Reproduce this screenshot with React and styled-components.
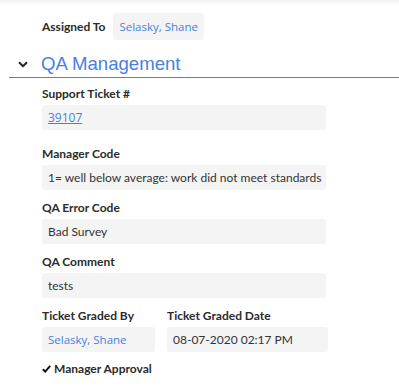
import React from "react";
import styled, { createGlobalStyle } from "styled-components";

const GlobalStyle = createGlobalStyle`
	body {
		margin: 0;
		background: #fff;
		font-family: "Lato", "Open Sans", sans-serif;
		color: #333;
	}
`;

const Page = styled.div`
	width: 399px;
	height: 388px;
	overflow: hidden;
	position: relative;
	&::before {
		content: "";
		position: absolute;
		top: 0;
		left: 0;
		right: 0;
		height: 6px;
		background: linear-gradient(rgba(0, 0, 0, 0.06), rgba(0, 0, 0, 0));
	}
`;

const AssignedRow = styled.div`
	display: flex;
	align-items: center;
	gap: 8px;
	padding: 13px 0 0 42px;
`;

const Label = styled.div`
	font-size: 12px;
	font-weight: 700;
	color: #2b2b2b;
	line-height: 15px;
	white-space: nowrap;
	margin-bottom: ${({ gap }) => (gap === undefined ? 4 : gap)}px;
`;

const Value = styled.div`
	box-sizing: border-box;
	background: #f4f4f4;
	border-radius: 3px;
	height: ${({ tall }) => (tall ? 27 : 25)}px;
	width: ${({ width }) => (width ? `${width}px` : "auto")};
	padding: 0 6px;
	display: flex;
	align-items: center;
	white-space: nowrap;
	font-size: ${({ blue }) => (blue ? 11.5 : 12)}px;
	color: ${({ blue }) => (blue ? "#4a7fdc" : "#333")};
	font-family: ${({ blue }) =>
		blue ? '"Open Sans", "Lato", sans-serif' : '"Lato", sans-serif'};
`;

const TicketLink = styled.a`
	color: #4a7fdc;
	text-decoration: underline;
	font-family: "Open Sans", "Lato", sans-serif;
`;

const Header = styled.div`
	display: flex;
	align-items: center;
	margin: 10px 0 0 9px;
	padding: 0 0 0 9px;
	height: 27px;
	border-bottom: 1.5px solid #4a80e0;
`;

const Chevron = styled.svg`
	width: 10px;
	height: 7px;
	margin-right: 13px;
	margin-top: 2px;
`;

const Title = styled.div`
	font-family: "Liberation Sans", Arial, sans-serif;
	font-size: 18.6px;
	color: #4a80e0;
	line-height: 22px;
`;

const Fields = styled.div`
	padding: 8px 0 0 42px;
	width: 284px;
`;

const Field = styled.div`
	margin-bottom: ${({ spacing }) => (spacing === undefined ? 10 : spacing)}px;
`;

const Pair = styled.div`
	display: flex;
	gap: 12px;
`;

const Approval = styled.div`
	display: flex;
	align-items: center;
	gap: 3px;
	margin-top: 9px;
	font-size: 12px;
	font-weight: 700;
	color: #2b2b2b;
`;

export default function App() {
	return (
		<Page>
			<GlobalStyle />
			<AssignedRow>
				<Label gap={0}>Assigned To</Label>
				<Value tall blue>
					Selasky, Shane
				</Value>
			</AssignedRow>
			<Header>
				<Chevron viewBox="0 0 10 7">
					<path
						d="M1 1.2 L5 5.2 L9 1.2"
						fill="none"
						stroke="#222"
						strokeWidth="2"
					/>
				</Chevron>
				<Title>QA Management</Title>
			</Header>
			<Fields>
				<Field spacing={16}>
					<Label>Support Ticket #</Label>
					<Value>
						<TicketLink href="#ticket">39107</TicketLink>
					</Value>
				</Field>
				<Field>
					<Label>Manager Code</Label>
					<Value>1= well below average: work did not meet standards</Value>
				</Field>
				<Field>
					<Label>QA Error Code</Label>
					<Value>Bad Survey</Value>
				</Field>
				<Field>
					<Label>QA Comment</Label>
					<Value>tests</Value>
				</Field>
				<Pair>
					<Field spacing={0}>
						<Label>Ticket Graded By</Label>
						<Value blue width={113}>
							Selasky, Shane
						</Value>
					</Field>
					<Field spacing={0}>
						<Label>Ticket Graded Date</Label>
						<Value width={161}>08-07-2020 02:17 PM</Value>
					</Field>
				</Pair>
				<Approval>
					<svg width="9" height="8" viewBox="0 0 9 8">
						<path d="M0.8 4.2 L3.2 6.6 L8.2 0.8" fill="none" stroke="#111" strokeWidth="2" />
					</svg>
					Manager Approval
				</Approval>
			</Fields>
		</Page>
	);
}
